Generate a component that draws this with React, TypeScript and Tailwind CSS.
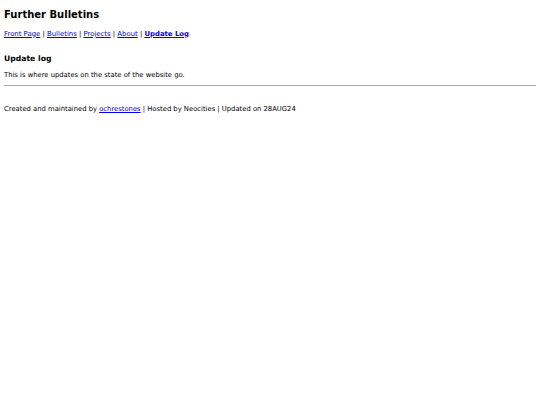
export default function App() {
  const links = ["Front Page", "Bulletins", "Projects", "About"];
  return (
    <div className="min-h-[405px] bg-white px-1 text-black font-['DejaVu_Sans',sans-serif]">
      <h1 className="pt-[9px] text-[10px] font-bold leading-[12px]">Further Bulletins</h1>
      <nav className="mt-[8.5px] text-[6.9px] leading-[9px]">
        {links.map((l) => (
          <span key={l}>
            <a href="#" className="text-[#0000ee] underline">{l}</a>
            {" | "}
          </span>
        ))}
        <a href="#" className="font-bold text-[#0000ee] underline">Update Log</a>
      </nav>
      <h2 className="mt-[15.5px] text-[7.7px] font-bold leading-[10px]">Update log</h2>
      <p className="mt-[6.5px] text-[6.8px] leading-[9px]">This is where updates on the state of the website go.</p>
      <hr className="mt-[5.5px] border-t border-[#aaaaaa]" />
      <p className="mt-[19px] text-[6.8px] leading-[9px]">
        Created and maintained by{" "}
        <a href="#" className="text-[#0000ee] underline">ochrestones</a> | Hosted by Neocities | Updated on 28AUG24
      </p>
    </div>
  );
}
